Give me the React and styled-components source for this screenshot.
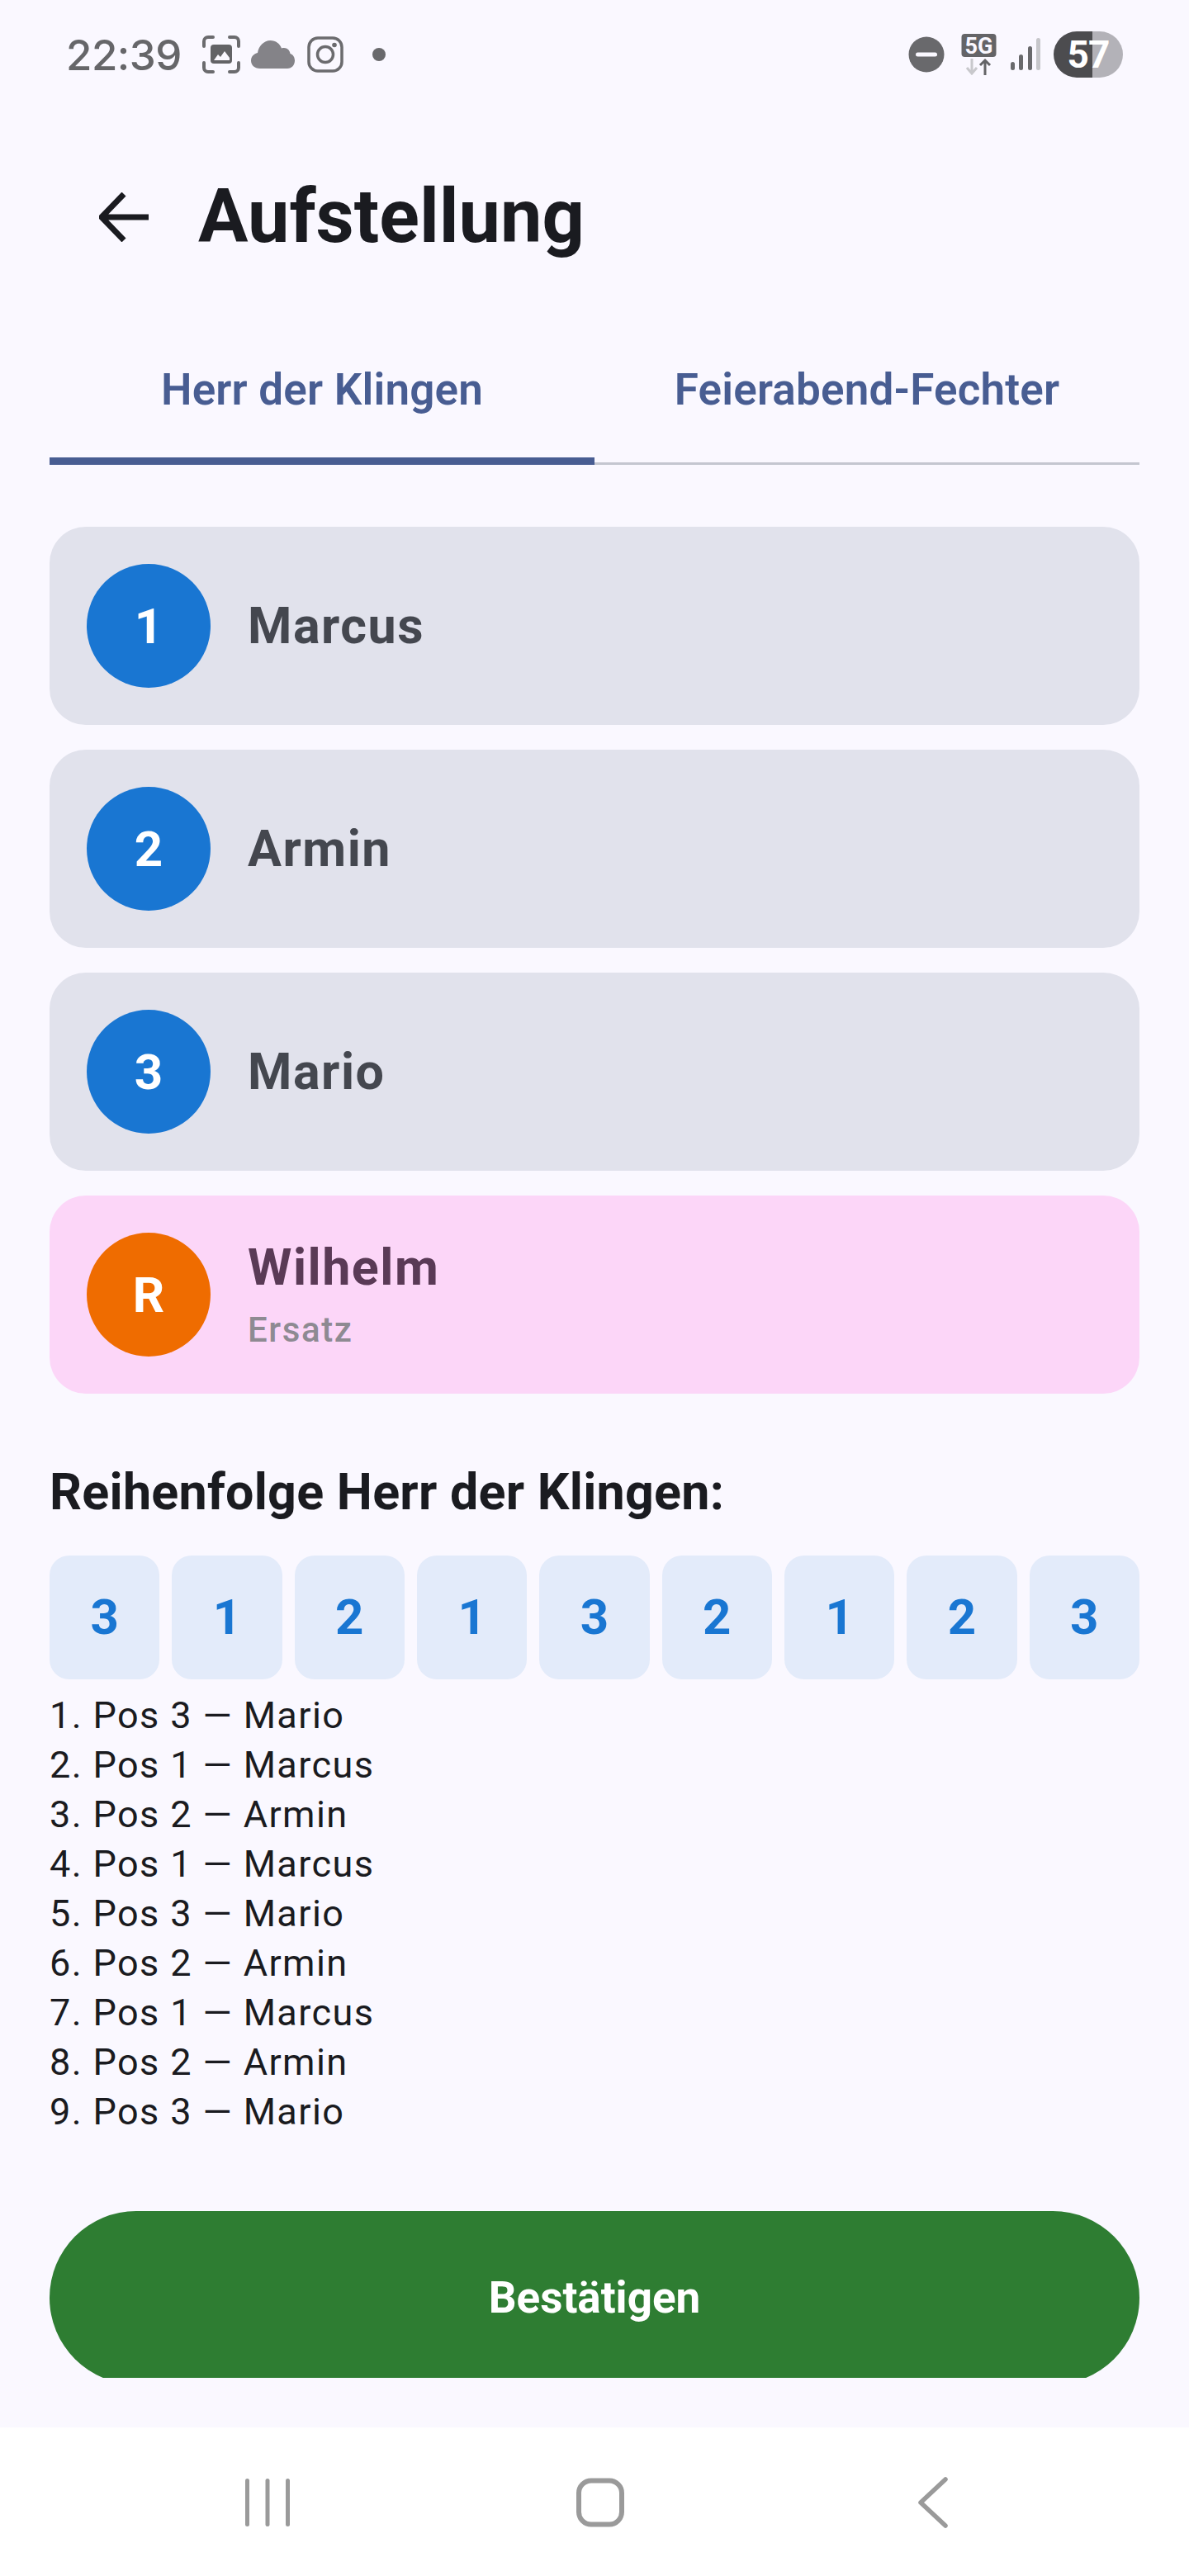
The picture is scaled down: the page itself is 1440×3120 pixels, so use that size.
import React from 'react'
import styled, { createGlobalStyle } from 'styled-components'

const Global = createGlobalStyle`
html, body { margin: 0; padding: 0; background: #faf8ff; }
* { box-sizing: border-box; }
`
const Phone = styled.div`
width: 1440px;
height: 3120px;
display: flex;
flex-direction: column;
background: #faf8ff;
font-family: Roboto, "Liberation Sans", sans-serif;
overflow: hidden;
`
const StatusBar = styled.div`
height: 132px;
flex: none;
display: flex;
align-items: center;
justify-content: space-between;
padding: 0 80px 0 80px;
`
const StatusGroup = styled.div`
display: flex;
align-items: center;
`
const Time = styled.span`
font-family: Inter, Roboto, sans-serif;
font-size: 51px;
font-weight: 500;
color: #666669;
letter-spacing: -0.5px;
margin-right: 24px;
`
const StatusIcon = styled.svg`
display: block;
flex: none;
margin-left: ${p => p.$ml || 0}px;
`
const Battery = styled.div`
width: 84px;
height: 56px;
margin-left: 16px;
border-radius: 28px;
background: linear-gradient(90deg, #4c4c4f 0 47px, #b3b2b8 47px 100%);
color: #fff;
font-size: 46px;
font-weight: 700;
line-height: 56px;
text-align: center;
letter-spacing: -1px;
`
const Header = styled.div`
height: 132px;
flex: none;
margin-top: 65px;
display: flex;
align-items: center;
padding-left: 120px;
`
const Title = styled.h1`
margin: 0 0 0 60px;
font-size: 90px;
font-weight: 700;
line-height: 132px;
color: #1a1b20;
`
const Tabs = styled.div`
flex: none;
margin: 60px 60px 0;
display: flex;
border-bottom: 3px solid #c4c6d0;
`
const Tab = styled.div`
flex: 1;
height: 174px;
margin-bottom: -3px;
text-align: center;
font-size: 53px;
font-weight: 600;
line-height: 166px;
letter-spacing: 0.2px;
color: #485d92;
border-bottom: 9px solid ${p => (p.$active ? '#485d92' : 'transparent')};
`
const Scroll = styled.div`
height: 2317px;
flex: none;
overflow: hidden;
padding: 75px 60px 0;
`
const Cards = styled.div`
display: flex;
flex-direction: column;
gap: 30px;
`
const Card = styled.div`
height: 240px;
border-radius: 44px;
display: flex;
align-items: center;
padding-left: 45px;
gap: 45px;
background: ${p => (p.$reserve ? '#fcd6f8' : '#e1e2ec')};
color: ${p => (p.$reserve ? '#5a3a56' : '#44474f')};
`
const Badge = styled.div`
width: 150px;
height: 150px;
border-radius: 50%;
flex: none;
display: grid;
place-items: center;
background: ${p => (p.$reserve ? '#ef6c00' : '#1976d2')};
color: #fff;
font-size: 60px;
font-weight: 700;
`
const CardText = styled.div`
display: flex;
flex-direction: column;
`
const Name = styled.div`
font-size: 61px;
font-weight: 700;
line-height: 70px;
letter-spacing: 1.5px;
`
const Sub = styled.div`
margin-top: 16px;
font-size: 42px;
font-weight: 500;
line-height: 50px;
letter-spacing: 1.6px;
color: #8e8a92;
`
const Heading = styled.h2`
margin: 84px 0 0;
font-size: 61px;
font-weight: 700;
line-height: 70px;
letter-spacing: 0.25px;
color: #1a1b20;
`
const Chips = styled.div`
margin-top: 42px;
display: grid;
grid-template-columns: repeat(9, 1fr);
gap: 15px;
`
const Chip = styled.div`
height: 150px;
padding-bottom: 2px;
border-radius: 24px;
background: #e3ebfa;
display: grid;
place-items: center;
color: #1976d2;
font-size: 60px;
font-weight: 700;
`
const Order = styled.div`
margin-top: 14px;
font-size: 45px;
line-height: 60px;
letter-spacing: 1.4px;
color: #1a1b20;
`
const Confirm = styled.button`
display: block;
width: 100%;
height: 210px;
margin-top: 90px;
border: 0;
border-radius: 105px;
background: #2e7d32;
color: #fff;
font-family: inherit;
font-size: 53px;
font-weight: 700;
`
const Gap = styled.div`
height: 60px;
flex: none;
`
const NavBar = styled.div`
height: 180px;
flex: none;
background: #fff;
display: flex;
align-items: center;
justify-content: center;
padding: 2px 0 0 14px;
`
const NavSlot = styled.div`
width: 403px;
display: flex;
justify-content: center;
`

const order = [
  [3, 'Mario'], [1, 'Marcus'], [2, 'Armin'], [1, 'Marcus'], [3, 'Mario'],
  [2, 'Armin'], [1, 'Marcus'], [2, 'Armin'], [3, 'Mario'],
]

const App = () => {
  return (
    <Phone>
      <Global />
      <StatusBar>
        <StatusGroup>
          <Time>22:39</Time>
          <StatusIcon width="48" height="48" viewBox="0 0 48 48" fill="none">
            <path d="M3 14V8a5 5 0 0 1 5-5h6M34 3h6a5 5 0 0 1 5 5v6M45 34v6a5 5 0 0 1-5 5h-6M14 45H8a5 5 0 0 1-5-5v-6" stroke="#6b6b6e" strokeWidth="4" strokeLinecap="round" />
            <rect x="11" y="12" width="26" height="23" rx="4" fill="#636366" />
            <path d="M15 31l5-7 3 3 5-7 6 8v3z" fill="#faf8ff" />
          </StatusIcon>
          <StatusIcon $ml="12" width="53" height="34" viewBox="0 0 53 34">
            <path d="M11 34C4 34 0 29.500 0 24.500 0 19.500 3.500 16 8 15 9 7 15.500 0 23.500 0 30 0 35 4 37 9.500 38 9 39 9 40 9c4 0 7 3 7.500 7 3.500 1 5.500 4.500 5.500 8.500 0 5-3.500 9.500-9 9.500z" fill="#848388" />
          </StatusIcon>
          <StatusIcon $ml="15" width="44" height="44" viewBox="0 0 44 44" fill="none">
            <rect x="2" y="2" width="40" height="40" rx="11" stroke="#6b6b6e" strokeWidth="3.500" />
            <circle cx="22" cy="22" r="9.500" stroke="#6b6b6e" strokeWidth="3.500" />
            <circle cx="33" cy="10.500" r="2.800" fill="#6b6b6e" />
          </StatusIcon>
          <StatusIcon $ml="35" width="16" height="16" viewBox="0 0 16 16">
            <circle cx="8" cy="8" r="8" fill="#69696c" />
          </StatusIcon>
        </StatusGroup>
        <StatusGroup>
          <StatusIcon width="44" height="44" viewBox="0 0 44 44">
            <circle cx="22" cy="22" r="21.500" fill="#69696c" />
            <rect x="9" y="19.500" width="26" height="5" rx="2.500" fill="#faf8ff" />
          </StatusIcon>
          <StatusIcon $ml="20" width="43" height="50" viewBox="0 0 43 50">
            <rect x="0.500" y="0" width="42" height="28" rx="4" fill="#646467" />
            <text x="21.500" y="24" textAnchor="middle" fontFamily="Roboto" fontWeight="700" fontSize="27" fill="#faf8ff">5G</text>
            <path d="M13 30v17M7 41l6 7 6-7" stroke="#c8c8cc" strokeWidth="3" fill="none" />
            <path d="M29 50V32M23 38l6-6 6 6" stroke="#646467" strokeWidth="3" fill="none" />
          </StatusIcon>
          <StatusIcon $ml="17" width="36" height="40" viewBox="0 0 36 40">
            <rect x="0" y="29" width="5" height="10" rx="2.500" fill="#69696c" />
            <rect x="10" y="20" width="5" height="19" rx="2.500" fill="#69696c" />
            <rect x="21" y="10" width="5" height="29" rx="2.500" fill="#69696c" />
            <rect x="31" y="0" width="5" height="39" rx="2.500" fill="#c6c6ca" />
          </StatusIcon>
          <Battery>57</Battery>
        </StatusGroup>
      </StatusBar>
      <Header>
        <StatusIcon width="60" height="60" viewBox="0 0 60 60" fill="none">
          <path d="M60 30H4M30 2L3 30l27 28" stroke="#1a1b20" strokeWidth="7" />
        </StatusIcon>
        <Title>Aufstellung</Title>
      </Header>
      <Tabs>
        <Tab $active>Herr der Klingen</Tab>
        <Tab>Feierabend-Fechter</Tab>
      </Tabs>
      <Scroll>
        <Cards>
          <Card><Badge>1</Badge><Name>Marcus</Name></Card>
          <Card><Badge>2</Badge><Name>Armin</Name></Card>
          <Card><Badge>3</Badge><Name>Mario</Name></Card>
          <Card $reserve>
            <Badge $reserve>R</Badge>
            <CardText>
              <Name>Wilhelm</Name>
              <Sub>Ersatz</Sub>
            </CardText>
          </Card>
        </Cards>
        <Heading>Reihenfolge Herr der Klingen:</Heading>
        <Chips>
          {order.map(([pos], i) => <Chip key={i}>{pos}</Chip>)}
        </Chips>
        <Order>
          {order.map(([pos, name], i) => (
            <div key={i}>{i + 1}. Pos {pos} — {name}</div>
          ))}
        </Order>
        <Confirm>Bestätigen</Confirm>
      </Scroll>
      <Gap />
      <NavBar>
        <NavSlot>
          <StatusIcon width="54" height="58" viewBox="0 0 54 58">
            <rect x="0" y="0" width="5" height="58" rx="2.500" fill="#9a9a9a" />
            <rect x="24.500" y="0" width="5" height="58" rx="2.500" fill="#9a9a9a" />
            <rect x="49" y="0" width="5" height="58" rx="2.500" fill="#9a9a9a" />
          </StatusIcon>
        </NavSlot>
        <NavSlot>
          <StatusIcon width="58" height="60" viewBox="0 0 58 60" fill="none">
            <rect x="3" y="3.500" width="52" height="53" rx="15" stroke="#9a9a9a" strokeWidth="6" />
          </StatusIcon>
        </NavSlot>
        <NavSlot>
          <StatusIcon width="36" height="62" viewBox="0 0 36 62" fill="none">
            <path d="M33 3L3 31l30 28" stroke="#9a9a9a" strokeWidth="5.500" strokeLinecap="round" strokeLinejoin="round" />
          </StatusIcon>
        </NavSlot>
      </NavBar>
    </Phone>
  )
}
export default App
